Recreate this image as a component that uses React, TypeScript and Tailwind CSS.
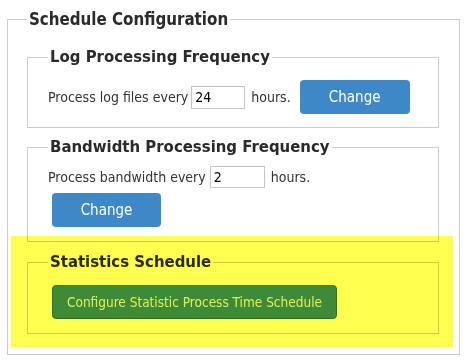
import React from "react";

const font = { fontFamily: '"DejaVu Sans Condensed", "DejaVu Sans", Tahoma, sans-serif' };

export default function App() {
  return (
    <div className="relative w-[472px] h-[362px] bg-white pt-[7px] text-[#333]" style={font}>
      <fieldset className="ml-[7px] w-[453px] border border-[#cccccc] pl-[19px] pr-[20px] pb-[20px]">
        <legend className="px-[2px] text-[16.8px] font-bold leading-[24px] text-[#2a2a2a]">
          Schedule Configuration
        </legend>

        <fieldset className="mt-[15px] border border-[#cccccc] pl-[20px] pr-[20px] pb-[13px]">
          <legend className="px-[2px] text-[16.6px] font-bold leading-[22px] text-[#2a2a2a]">
            Log Processing Frequency
          </legend>
          <div className="flex items-center pt-[12px] text-[14px]">
            <span>Process log files every</span>
            <input
              readOnly
              value="24"
              className="ml-[3px] w-[54px] h-[23px] border border-[#c4c4c4] px-[3px] text-[14px] text-black outline-none"
            />
            <span className="ml-[6px]">hours.</span>
            <button className="ml-[9px] w-[110px] h-[34px] rounded-[4px] bg-[#3f88c8] text-[15px] text-white">
              Change
            </button>
          </div>
        </fieldset>

        <fieldset className="mt-[8px] border border-[#cccccc] pl-[20px] pr-[20px] pb-[14px]">
          <legend className="px-[2px] text-[16.6px] font-bold leading-[22px] text-[#2a2a2a]">
            Bandwidth Processing Frequency
          </legend>
          <div className="flex items-center pt-[8px] text-[14px]">
            <span>Process bandwidth every</span>
            <input
              readOnly
              value="2"
              className="ml-[4px] w-[55px] h-[22px] border border-[#c4c4c4] px-[3px] text-[14px] text-black outline-none"
            />
            <span className="ml-[6px]">hours.</span>
          </div>
          <button className="mt-[5px] ml-[4px] w-[109px] h-[34px] rounded-[4px] bg-[#3f88c8] text-[15px] text-white">
            Change
          </button>
        </fieldset>

        <fieldset className="mt-[9px] border border-[#cccccc] pl-[20px] pr-[20px] pb-[14px]">
          <legend className="px-[2px] text-[16.6px] font-bold leading-[22px] text-[#2a2a2a]">
            Statistics Schedule
          </legend>
          <div className="pt-[12px]">
            <button className="ml-[4px] w-[285px] h-[34px] rounded-[4px] border border-[#2f6f5f] bg-[rgb(62,138,180)] text-[13.5px] text-[#e0f0ff]">
              Configure Statistic Process Time Schedule
            </button>
          </div>
        </fieldset>
      </fieldset>

      <div className="pointer-events-none absolute left-[11px] top-[236px] w-[442px] h-[111px] bg-[#ffff50] mix-blend-multiply" />
    </div>
  );
}
